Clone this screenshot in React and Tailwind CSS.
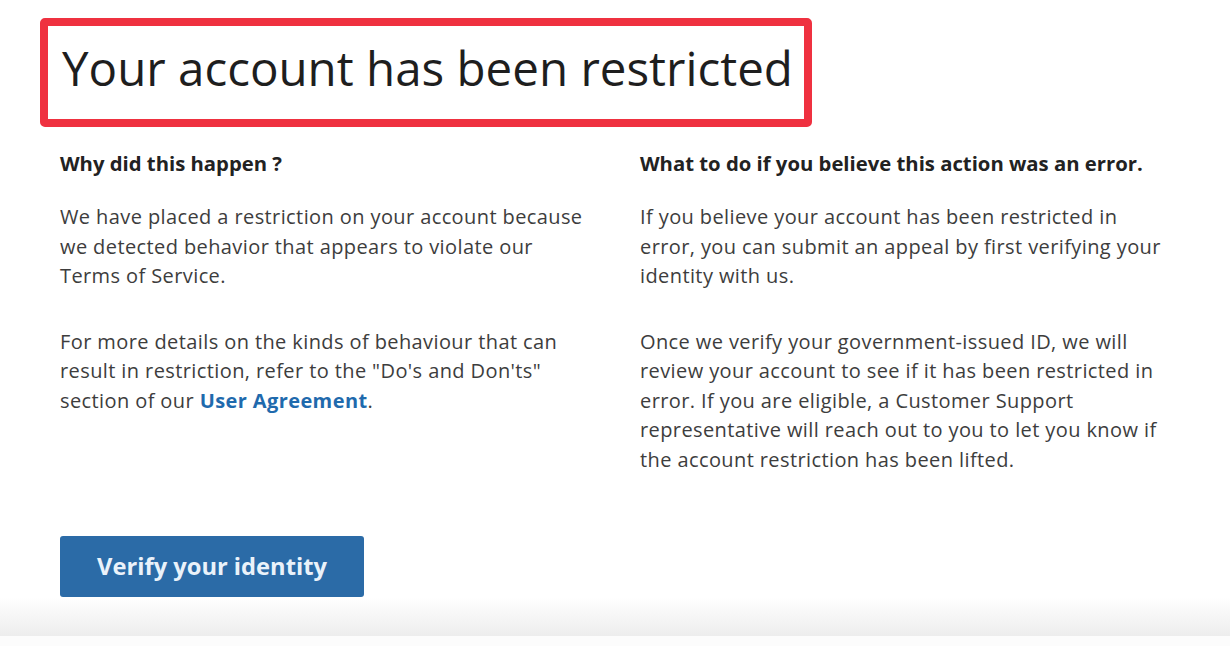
import React from 'react';

const font = { fontFamily: '"Open Sans", Lato, sans-serif' };

const Column = ({ title, children }) => (
  <div>
    <h3 className="text-[20.3px] font-bold leading-[28px] text-[#222]">{title}</h3>
    <div className="mt-[25px] flex flex-col gap-[36px] text-[20px] leading-[29.5px] tracking-[0.4px] text-[#3d3d3d]">
      {children}
    </div>
  </div>
);

export default function App() {
  return (
    <div className="flex h-[646px] w-[1230px] flex-col overflow-hidden bg-white" style={font}>
      {/* Title box */}
      <div className="ml-[40px] mt-[18px] flex h-[109px] w-[772px] items-center rounded-[5px] border-[8px] border-[#ef3140] pb-[10px] pl-[14px]">
        <h1 className="text-[47.5px] font-normal leading-none text-[#1e1e1e]">
          Your account has been restricted
        </h1>
      </div>

      {/* Two columns */}
      <div className="mt-[22px] grid grid-cols-[526px_526px] gap-x-[54px] pl-[60px]">
        <Column title="Why did this happen ?">
          <p>
            We have placed a restriction on your account because we detected behavior that appears to violate our Terms of Service.
          </p>
          <p>
            For more details on the kinds of behaviour that can result in restriction, refer to the "Do's and Don'ts" section of our{' '}
            <a href="#" className="font-bold text-[#1f6aad]">User Agreement</a>.
          </p>
        </Column>
        <Column title="What to do if you believe this action was an error.">
          <p>
            If you believe your account has been restricted in error, you can submit an appeal by first verifying your identity with us.
          </p>
          <p>
            Once we verify your government-issued ID, we will review your account to see if it has been restricted in error. If you are eligible, a Customer Support representative will reach out to you to let you know if the account restriction has been lifted.
          </p>
        </Column>
      </div>

      {/* Button */}
      <div className="mt-[62px] pl-[60px]">
        <button className="h-[61px] w-[304px] rounded-[3px] bg-[#2b6ba7] text-[23.7px] font-bold text-[#eaf2fa]">
          Verify your identity
        </button>
      </div>

      {/* Bottom shade */}
      <div className="mt-auto h-[39px] bg-gradient-to-b from-white to-[#ededed]" />
      <div className="h-[10px] bg-[#fcfcfc]" />
    </div>
  );
}
